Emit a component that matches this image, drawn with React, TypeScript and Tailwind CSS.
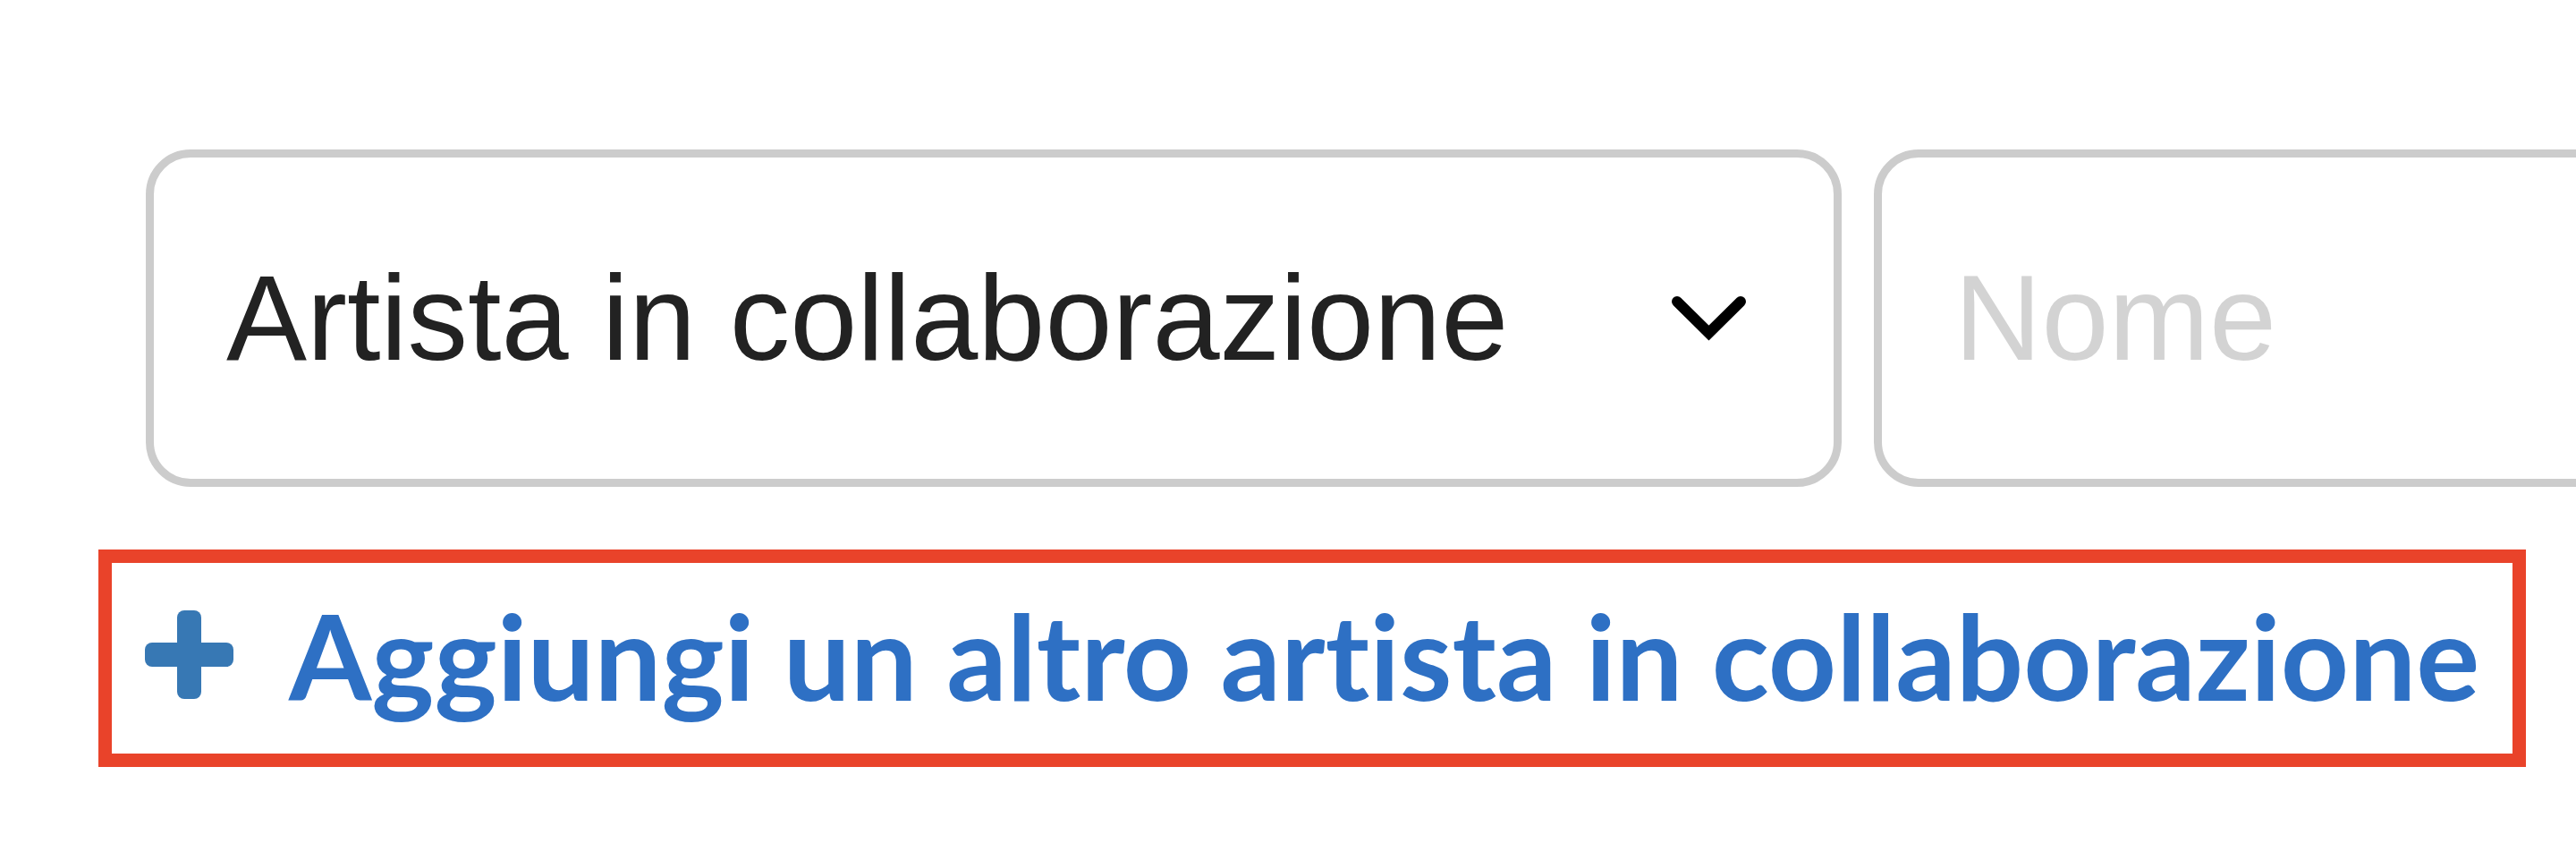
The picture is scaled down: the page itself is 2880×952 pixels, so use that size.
import { useState } from "react";

const ChevronDown = () => (
  <svg width="85" height="51" viewBox="0 0 85 51" fill="none">
    <polyline
      points="7,7 42.5,42 78,7"
      stroke="#000"
      strokeWidth="12"
      strokeLinecap="round"
      strokeLinejoin="miter"
    />
  </svg>
);

const PlusIcon = () => (
  <svg width="99" height="99" viewBox="0 0 99 99">
    <rect x="36" y="0" width="27" height="99" rx="8" fill="#3778b4" />
    <rect x="0" y="36" width="99" height="27" rx="8" fill="#3778b4" />
  </svg>
);

export default function App() {
  const [role] = useState("Artista in collaborazione");
  const [name, setName] = useState("");

  return (
    <div className="w-full h-[952px] overflow-hidden bg-white">
      <div className="flex gap-[36px] pl-[163px] pt-[167px]">
        <div className="shrink-0 w-[1896px] h-[377px] flex items-center justify-between border-[9px] border-[#cccccc] rounded-[50px] pl-[81px] pr-[97px] bg-white">
          <span className="font-['Liberation_Sans',Arial,sans-serif] text-[135px] leading-none text-[#222222] whitespace-nowrap">
            {role}
          </span>
          <ChevronDown />
        </div>
        <input
          value={name}
          onChange={(e) => setName(e.target.value)}
          placeholder="Nome"
          className="shrink-0 w-[1200px] h-[377px] border-[9px] border-[#cccccc] rounded-[50px] pl-[81px] font-['Liberation_Sans',Arial,sans-serif] text-[135px] text-[#222222] placeholder:text-[#d3d3d3] outline-none bg-white"
        />
      </div>

      <div className="ml-[110px] mt-[70px] inline-flex items-center h-[243px] border-[15px] border-[#e9432a] px-[37px] pb-[8px] gap-[62px]">
        <PlusIcon />
        <span className="font-['Lato',sans-serif] font-bold text-[133px] leading-none text-[#2e70c4] whitespace-nowrap [font-variant-ligatures:none]">
          Aggiungi un altro artista in collaborazione
        </span>
      </div>
    </div>
  );
}
